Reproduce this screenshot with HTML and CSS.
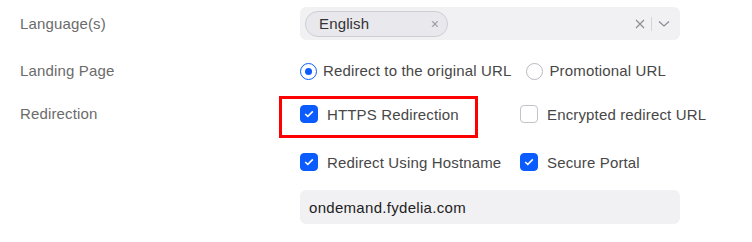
FILE: index.html
```html
<!DOCTYPE html>
<html lang="en">
    <head>
        <meta charset="UTF-8">
        <title>Meeting settings</title>
        <link rel="stylesheet" href="styles.css">
    </head>
    <body>
        <div class="form">
            <div class="row row-lang">
                <span class="label">Language(s)</span>
                <div class="select">
                    <span class="tag">English <span class="tag-x">&times;</span></span>
                    <span class="select-tools">
                        <svg class="clear" width="10" height="10" viewBox="0 0 10 10"><path d="M1 1 L9 9 M9 1 L1 9" stroke="#8a8a94" stroke-width="1.1" fill="none"/></svg>
                        <span class="divider"></span>
                        <svg class="chevron" width="12" height="8" viewBox="0 0 12 8"><path d="M1 1.5 L6 6 L11 1.5" stroke="#8a8a94" stroke-width="1.2" fill="none"/></svg>
                    </span>
                </div>
            </div>
            <div class="row row-landing">
                <span class="label">Landing Page</span>
                <div class="radios">
                    <label class="radio checked"><span class="dot"></span>Redirect to the original URL</label>
                    <label class="radio"><span class="dot"></span>Promotional URL</label>
                </div>
            </div>
            <div class="row row-redirect">
                <span class="label">Redirection</span>
                <div class="controls">
                    <div class="checks">
                        <label class="check checked highlight"><span class="box"><svg width="10" height="8" viewBox="0 0 10 8"><path d="M1.2 4 L3.8 6.4 L8.8 1.4" stroke="#fff" stroke-width="1.5" fill="none"/></svg></span>HTTPS Redirection</label>
                        <label class="check"><span class="box"></span>Encrypted redirect URL</label>
                        <label class="check checked"><span class="box"><svg width="10" height="8" viewBox="0 0 10 8"><path d="M1.2 4 L3.8 6.4 L8.8 1.4" stroke="#fff" stroke-width="1.5" fill="none"/></svg></span>Redirect Using Hostname</label>
                        <label class="check checked"><span class="box"><svg width="10" height="8" viewBox="0 0 10 8"><path d="M1.2 4 L3.8 6.4 L8.8 1.4" stroke="#fff" stroke-width="1.5" fill="none"/></svg></span>Secure Portal</label>
                    </div>
                    <div class="input">ondemand.fydelia.com</div>
                </div>
            </div>
        </div>
    </body>
</html>
```

FILE: styles.css
```css
* {
    box-sizing: border-box;
}

body {
    margin: 0;
    background: #fff;
    font-family: "Liberation Sans", Arial, sans-serif;
    font-size: 15px;
    letter-spacing: 0.15px;
    color: #474747;
}

.form {
    padding: 7px 0 0 20px;
    width: 680px;
}

.row {
    display: grid;
    grid-template-columns: 280px 380px;
}

.label {
    color: #6b6b6b;
    line-height: 20px;
}

.row-lang {
    align-items: center;
}

.select {
    height: 33px;
    background: #f1f1f4;
    border-radius: 6px;
    display: flex;
    align-items: center;
    justify-content: space-between;
    padding: 0 10px 0 5px;
}

.tag {
    width: 143px;
    height: 26px;
    border: 1px solid #cdcdd4;
    background: #e8e8ed;
    border-radius: 13px;
    display: flex;
    align-items: center;
    justify-content: space-between;
    padding: 0 8px 0 13px;
    color: #333;
}

.tag-x {
    color: #9a9aa3;
    font-size: 14px;
}

.select-tools {
    display: flex;
    align-items: center;
    gap: 6px;
}

.divider {
    width: 1px;
    height: 14px;
    background: #d4d4da;
}

.row-landing {
    margin-top: 21px;
}

.radios {
    display: flex;
    gap: 15px;
    line-height: 20px;
}

.radio {
    display: flex;
    align-items: center;
    gap: 6px;
}

.radio .dot {
    flex: none;
    width: 17px;
    height: 17px;
    border-radius: 50%;
    border: 1px solid #b9b9c2;
    display: flex;
    align-items: center;
    justify-content: center;
}

.radio.checked .dot {
    border: 1.5px solid #0b5cff;
}

.radio.checked .dot:after {
    content: "";
    width: 7px;
    height: 7px;
    border-radius: 50%;
    background: #0b5cff;
}

.row-redirect {
    margin-top: 15px;
}

.row-redirect .label {
    padding-top: 8px;
}

.checks {
    display: grid;
    grid-template-columns: 220px 160px;
    grid-auto-rows: 36px;
    row-gap: 12px;
}

.check {
    position: relative;
    display: flex;
    align-items: center;
    gap: 9px;
    white-space: nowrap;
}

.check .box {
    flex: none;
    width: 18px;
    height: 18px;
    border-radius: 4px;
    border: 1px solid #c3c3cb;
    display: flex;
    align-items: center;
    justify-content: center;
}

.check.checked .box {
    background: #0b5cff;
    border-color: #0b5cff;
}

.highlight:after {
    content: "";
    position: absolute;
    left: -21px;
    top: 0;
    width: 193px;
    height: 36px;
    border: 3px solid #f00;
}

.input {
    margin-top: 10px;
    height: 34px;
    background: #f1f1f4;
    border-radius: 6px;
    padding: 0 9px;
    display: flex;
    align-items: center;
    color: #222;
    letter-spacing: 0.3px;
}
```
